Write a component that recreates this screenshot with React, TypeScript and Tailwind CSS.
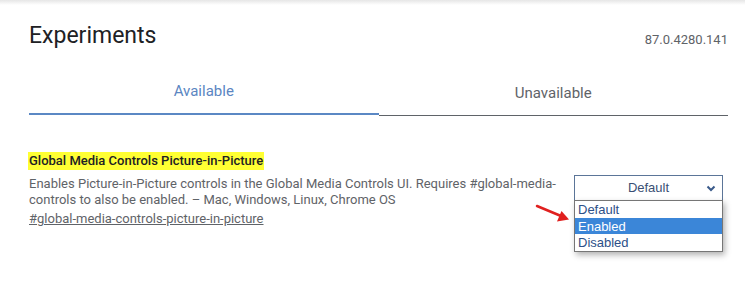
import React from 'react';

export default function App() {
  const options = ['Default', 'Enabled', 'Disabled'];

  return (
    <div className="relative w-[745px] h-[305px] overflow-hidden bg-white font-['Roboto',sans-serif]">
      {/* top shadow */}
      <div className="h-[5px] bg-gradient-to-b from-[#e6e6e6] to-white" />

      <div className="pl-[29px] pr-[17px]">
        {/* Header */}
        <div className="flex items-end justify-between pt-[16px]">
          <h1 className="text-[23px] leading-[30px] text-[#202124]">Experiments</h1>
          <span className="text-[13px] leading-[20px] text-[#5f6368] pb-[1px]">87.0.4280.141</span>
        </div>

        {/* Tabs */}
        <div className="grid grid-cols-2 mt-[19px]">
          <div className="h-[45px] flex items-center justify-center border-b-2 border-[#5b88c4] text-[15px] text-[#5b86c2]">
            Available
          </div>
          <div className="h-[45px] flex items-center justify-center border-b border-[#5f6368] mt-[1px] text-[15px] text-[#5f6368]">
            Unavailable
          </div>
        </div>

        {/* Experiment */}
        <div className="flex justify-between mt-[32px]">
          <div className="w-[535px]">
            <h2 className="inline-block bg-[#ffff33] px-[1px] -ml-[1px] text-[13px] leading-[18px] font-medium text-[#202124]">
              Global Media Controls Picture-in-Picture
            </h2>
            <p className="mt-[4px] text-[13px] leading-[16px] text-[#5f6368]">
              Enables Picture-in-Picture controls in the Global Media Controls UI. Requires #global-media-controls to also be enabled. – Mac, Windows, Linux, Chrome OS
            </p>
            <a className="block mt-[2px] text-[13px] leading-[18px] text-[#5f6368] underline">
              #global-media-controls-picture-in-picture
            </a>
          </div>

          <div className="relative mt-[27px] mr-[5px] w-[149px]">
            <div className="relative h-[26px] border border-[#5b7598] bg-white flex items-center justify-center font-['Liberation_Sans',Arial,sans-serif] text-[13px] text-[#3a4f74]">
              Default
              <svg className="absolute right-[6px] top-[9px] w-[10px] h-[7px]" viewBox="0 0 10 7">
                <path d="M1.5 1.5L5 5l3.5-3.5" fill="none" stroke="#3a5a8a" strokeWidth="2" />
              </svg>
            </div>
            <div className="absolute left-0 top-[25px] w-[149px] border border-[#767676] bg-white shadow-[2px_3px_6px_rgba(0,0,0,0.3)] font-['Liberation_Sans',Arial,sans-serif] text-[13px] leading-[17px]">
              {options.map((o) => (
                <div
                  key={o}
                  className={`px-[3px] h-[16.5px] ${o === 'Enabled' ? 'bg-[#3b86d8] text-white' : 'text-[#2d5088]'}`}
                >
                  {o}
                </div>
              ))}
            </div>
          </div>
        </div>
      </div>

      {/* red arrow */}
      <svg className="absolute left-[534px] top-[202px] w-[38px] h-[22px]" viewBox="0 0 38 22">
        <path d="M3 4L27 14" stroke="#e0201f" strokeWidth="2.5" strokeLinecap="round" />
        <path d="M35 17.5L23 19.5L27.5 9Z" fill="#e0201f" />
      </svg>
    </div>
  );
}
